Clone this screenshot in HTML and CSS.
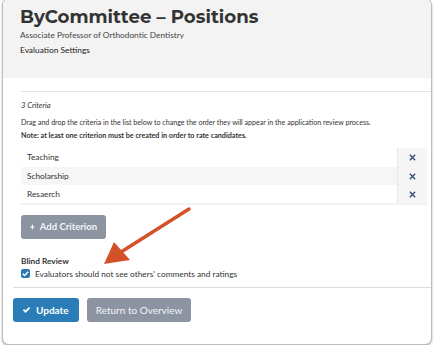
FILE: index.html
```html
<!DOCTYPE html>
<html lang="en">
<head>
    <meta charset="UTF-8">
    <meta name="viewport" content="width=device-width, initial-scale=1.0">
    <title>Evaluation Settings</title>
    <link rel="stylesheet" href="styles.css">
</head>
<body>
    <div class="card">
        <div class="head">
            <h1>ByCommittee – Positions</h1>
            <p class="sub">Associate Professor of Orthodontic Dentistry</p>
            <p class="page">Evaluation Settings</p>
        </div>
        <div class="section">
            <hr>
            <p class="count">3 Criteria</p>
            <p class="help">Drag and drop the criteria in the list below to change the order they will appear in the application review process.</p>
            <p class="note">Note: at least one criterion must be created in order to rate candidates.</p>
            <table class="crit">
                <tr><td>Teaching</td><td class="del"><svg viewBox="0 0 10 10"><path d="M1.5 2.6L2.6 1.5L5 3.9L7.4 1.5L8.5 2.6L6.1 5L8.5 7.4L7.4 8.5L5 6.1L2.6 8.5L1.5 7.4L3.9 5Z"/></svg></td></tr>
                <tr class="odd"><td>Scholarship</td><td class="del"><svg viewBox="0 0 10 10"><path d="M1.5 2.6L2.6 1.5L5 3.9L7.4 1.5L8.5 2.6L6.1 5L8.5 7.4L7.4 8.5L5 6.1L2.6 8.5L1.5 7.4L3.9 5Z"/></svg></td></tr>
                <tr><td>Resaerch</td><td class="del"><svg viewBox="0 0 10 10"><path d="M1.5 2.6L2.6 1.5L5 3.9L7.4 1.5L8.5 2.6L6.1 5L8.5 7.4L7.4 8.5L5 6.1L2.6 8.5L1.5 7.4L3.9 5Z"/></svg></td></tr>
            </table>
            <button class="btn gray add"><svg viewBox="0 0 10 10"><path d="M3.8 0.5h2.4v3.3h3.3v2.4H6.2v3.3H3.8V6.2H0.5V3.8h3.3z"/></svg>Add Criterion</button>
            <p class="label">Blind Review</p>
            <label class="check"><span class="box"><svg viewBox="0 0 10 10"><path d="M2 5.2L4 7.2L8 3" /></svg></span>Evaluators should not see others' comments and ratings</label>
        </div>
        <div class="foot">
            <button class="btn blue"><svg viewBox="0 0 10 10"><path d="M1.6 5.2L3.9 7.4L8.4 2.8" /></svg>Update</button>
            <button class="btn gray">Return to Overview</button>
        </div>
        <svg class="arrow" viewBox="0 0 120 80">
            <line x1="98" y1="13" x2="30" y2="56" />
            <path d="M13 68L23 46L39 64Z" />
        </svg>
    </div>
</body>
</html>
```

FILE: styles.css
```css
*{
    margin: 0;
    padding: 0;
    box-sizing: border-box;
}
body{
    background: #fff;
    font-family: Lato, "Open Sans", sans-serif;
    color: #333;
}
.card{
    position: relative;
    margin: -2px 3px 0 2px;
    height: 347px;
    border: 1px solid #bdbdbd;
    border-radius: 7px;
    box-shadow: 0 1px 2px rgba(0,0,0,.35);
    overflow: hidden;
    background: #fff;
}
.head{
    background: #f3f3f3;
    height: 79px;
    padding: 7px 0 0 17px;
}
h1{
    font-family: Montserrat, "Open Sans", Lato, sans-serif;
    font-weight: 700;
    font-size: 18.2px;
    line-height: 22px;
    color: #333;
}
.sub{
    font-size: 8.3px;
    line-height: 13px;
    margin-top: 1px;
    color: #444;
}
.page{
    font-size: 8.4px;
    line-height: 13px;
    margin-top: 2px;
    color: #222;
}
.section{
    padding: 13px 4px 0 18px;
}
hr{
    border: 0;
    border-top: 1px solid #e3e3e3;
    margin-right: -4px;
}
.count{
    font-style: italic;
    font-size: 7.6px;
    margin-top: 8px;
    line-height: 11px;
}
.help,.note{
    line-height: 13px;
}
.help{
    margin-top: 5px;
    font-size: 7.1px;
}
.note{
    font-weight: 700;
    font-size: 7.2px;
}
.crit{
    width: 100%;
    margin-top: 6px;
    border-collapse: collapse;
    font-size: 8.3px;
}
.crit td{
    height: 18.6px;
    padding-left: 6px;
}
.crit tr:last-child td{
    border-bottom: 2px solid #f2f2f2;
}
.crit .odd td{
    background: #f6f6f6;
}
.crit td.del{
    width: 30px;
    padding: 0;
    text-align: center;
    background: #f5f5f5;
    border-left: 1px solid #e8e8e8;
    border-bottom: 0;
}
.del svg{
    width: 9px;
    height: 9px;
    fill: #3c4f7a;
    vertical-align: middle;
}
.btn{
    display: inline-flex;
    align-items: center;
    gap: 5px;
    border: 0;
    border-radius: 3px;
    color: #fff;
    font-family: Lato, sans-serif;
    font-weight: 700;
    font-size: 9.5px;
    height: 24px;
    padding: 0 9px;
    white-space: nowrap;
}
.btn svg{
    width: 9px;
    height: 9px;
}
.gray{
    background: #8c93a1;
    color: #f4f5f7;
}
.blue{
    background: #2a7db7;
}
.add{
    margin-top: 10px;
    width: 85px;
}
.add svg{
    fill: #fff;
    width: 8px;
    height: 8px;
}
.blue svg path{
    fill: none;
    stroke: #fff;
    stroke-width: 2;
}
.label{
    font-weight: 700;
    font-size: 8.3px;
    margin-top: 16px;
    line-height: 12px;
}
.check{
    display: flex;
    align-items: center;
    gap: 5px;
    font-size: 8.3px;
    line-height: 12px;
    margin-top: 1px;
    color: #333;
}
.box{
    width: 9px;
    height: 9px;
    border-radius: 2px;
    background: #2b78b3;
    display: inline-flex;
}
.box svg{
    width: 9px;
    height: 9px;
}
.box path{
    fill: none;
    stroke: #fff;
    stroke-width: 1.6;
}
.foot{
    margin: 7px 0 0 10px;
    border-top: 1px solid #dcdcdc;
    padding-top: 10px;
    display: flex;
    gap: 8px;
}
.foot .btn{
    height: 24px;
    font-weight: 400;
    font-size: 10px;
}
.foot .blue{
    width: 66px;
    font-weight: 700;
}
.foot .gray{
    width: 104px;
    justify-content: center;
}
.arrow{
    position: absolute;
    left: 88px;
    top: 197px;
    width: 120px;
    height: 80px;
}
.arrow line{
    stroke: #d4522a;
    stroke-width: 3.5;
    stroke-linecap: round;
}
.arrow path{
    fill: #d4522a;
}
```
